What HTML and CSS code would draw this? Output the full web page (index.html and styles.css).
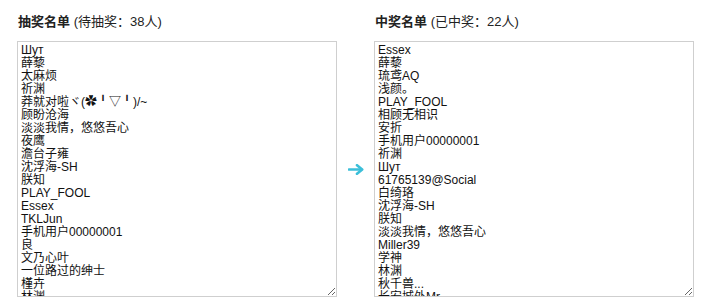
FILE: index.html
```html
<!DOCTYPE html>
<html lang="zh-CN">
<head>
<meta charset="utf-8">
<link rel="stylesheet" href="styles.css">
</head>
<body>
<div class="board">
  <h3 class="title"><b>抽奖名单</b> (待抽奖：38人)</h3>
  <div class="spacer"></div>
  <h3 class="title"><b>中奖名单</b> (已中奖：22人)</h3>
  <textarea class="list">Шут
薛藜
太麻烦
祈渊
莽就对啦ヾ(✿╹▽╹)/~
顾盼沧海
淡淡我情，悠悠吾心
夜鹰
澹台子雍
沈浮海-SH
朕知
PLAY_FOOL
Essex
TKLJun
手机用户00000001
良
文乃心叶
一位路过的绅士
槿卉
林渊
秋千兽...
长安城外Mr</textarea>
  <div class="arrow">
    <svg width="16" height="11" viewBox="0 0 16 11" aria-hidden="true">
      <path d="M1 5.5 H13" stroke="#3cbfd9" stroke-width="2.6" stroke-linecap="round"/>
      <path d="M9 1.2 L14.2 5.5 L9 9.8" fill="none" stroke="#3cbfd9" stroke-width="2.6" stroke-linecap="round" stroke-linejoin="round"/>
    </svg>
  </div>
  <textarea class="list">Essex
薛藜
琉鸢AQ
浅颜。
PLAY_FOOL
相顾无相识
安折
手机用户00000001
祈渊
Шут
61765139@Social
白绮珞
沈浮海-SH
朕知
淡淡我情，悠悠吾心
Miller39
学神
林渊
秋千兽...
长安城外Mr</textarea>
</div>
</body>
</html>
```
FILE: styles.css
```css
html, body {
  margin: 0;
  padding: 0;
  background: #fff;
}
.board {
  display: grid;
  grid-template-columns: 320px 37px 320px;
  grid-template-rows: 18px 256px;
  row-gap: 10px;
  padding: 13px 0 0 17px;
  font-family: "Liberation Sans", "Noto Sans CJK SC", sans-serif;
  color: #222;
}
.title {
  margin: 0;
  font-size: 13px;
  line-height: 18px;
  font-weight: normal;
  padding-left: 1px;
  white-space: nowrap;
}
.title b {
  font-weight: bold;
}
.list {
  box-sizing: border-box;
  width: 320px;
  height: 256px;
  margin: 0;
  padding: 2px 3px;
  border: 1px solid #cfcfcf;
  font-family: "Liberation Sans", "Noto Sans CJK SC", sans-serif;
  font-size: 12px;
  line-height: 13px;
  color: #111;
  background: #fff;
  scrollbar-width: none;
  resize: both;
  outline: none;
}
.arrow {
  display: flex;
  align-items: center;
  justify-content: center;
  padding-left: 1px;
}
```
